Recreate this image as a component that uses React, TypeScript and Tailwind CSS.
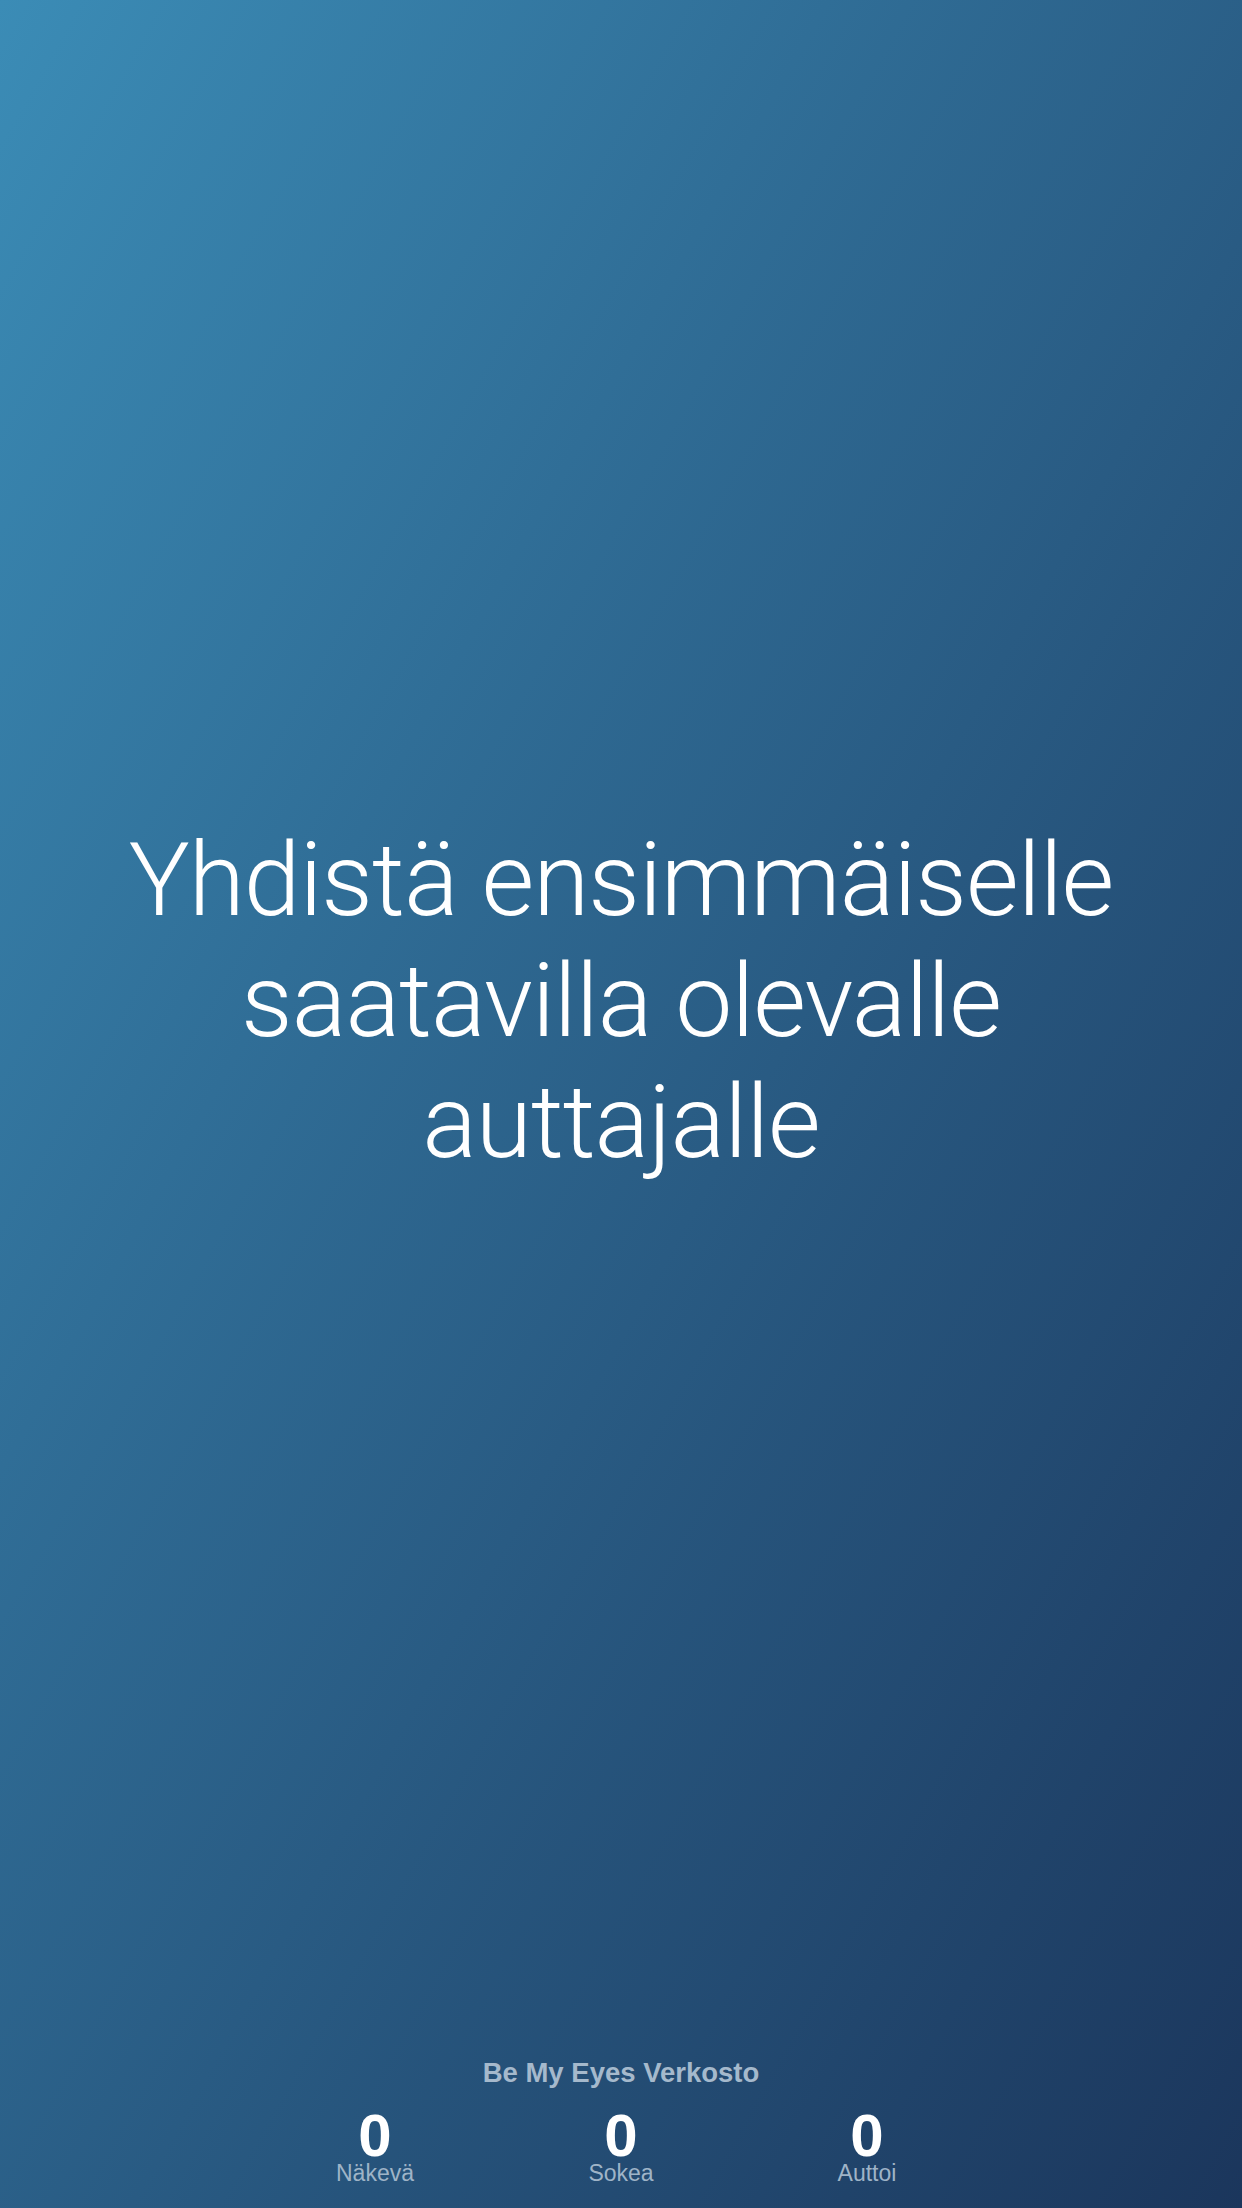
import React from "react";

export default function App() {
  const stats = [
    { n: "0", label: "Näkevä" },
    { n: "0", label: "Sokea" },
    { n: "0", label: "Auttoi" },
  ];
  return (
    <div className="flex h-[2208px] w-[1242px] flex-col bg-linear-to-br from-[#3b8cb6] to-[#1b365c] font-['Roboto','Liberation_Sans',sans-serif]">
      <div className="flex flex-1 items-center justify-center pb-[54px]">
        <h1 className="text-center text-[102px] font-light leading-[121px] tracking-[-1px] text-white">
          Yhdistä ensimmäiselle
          <br />
          saatavilla olevalle
          <br />
          auttajalle
        </h1>
      </div>
      <div className="flex flex-col items-center pb-[23px]">
        <div className="font-['Liberation_Sans',sans-serif] text-[27.5px] font-bold leading-[32px] text-[#a5b9cc]">
          Be My Eyes Verkosto
        </div>
        <div className="mt-[21px] flex w-[738px]">
          {stats.map((s) => (
            <div key={s.label} className="flex flex-1 flex-col items-center">
              <div className="font-['Liberation_Sans',sans-serif] text-[60px] font-bold leading-[52px] text-white">
                {s.n}
              </div>
              <div className="font-['Liberation_Sans',sans-serif] text-[23px] leading-[23px] text-[#9fb4c7]">
                {s.label}
              </div>
            </div>
          ))}
        </div>
      </div>
    </div>
  );
}
